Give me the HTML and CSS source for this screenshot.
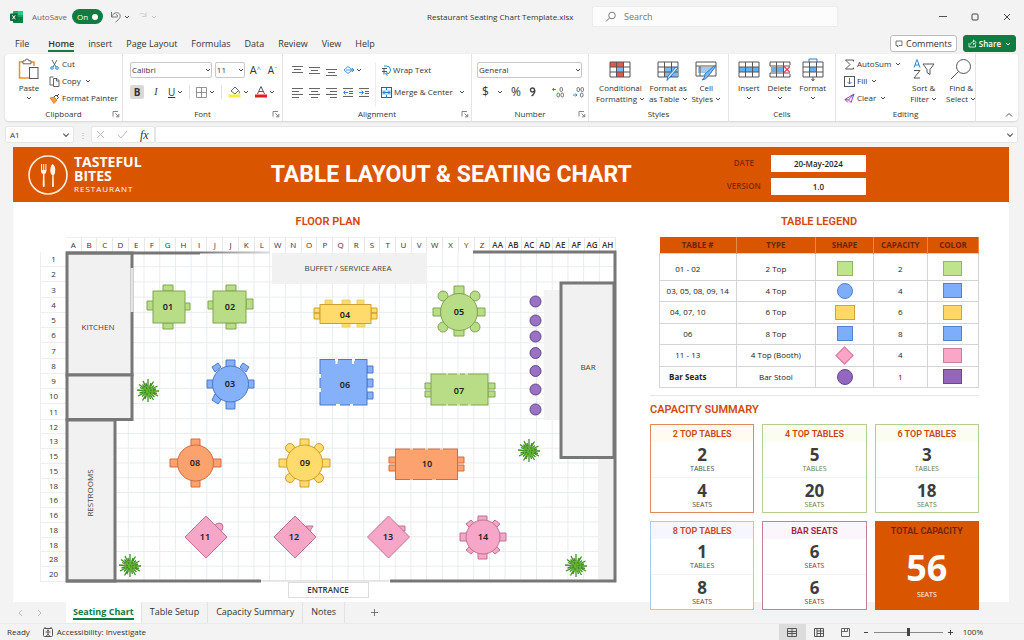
FILE: index.html
```html
<!DOCTYPE html>
<html lang="en">
<head>
  <meta charset="UTF-8">
  <meta name="viewport" content="width=device-width, initial-scale=1.0">
  <title>Restaurant Seating Chart Template.xlsx</title>
  <link rel="stylesheet" href="styles.css">
</head>
<body>
  <!-- shared icons -->
  <svg class="defs" width="0" height="0">
    <symbol id="chev" viewBox="0 0 6 6"><path d="M1 2l2 2 2-2" fill="none" stroke="currentColor" stroke-width="0.9"/></symbol>
    <symbol id="launch" viewBox="0 0 8 8"><path d="M1 6.500V1.500h5M3.500 3.500l3 3M6.800 4v2.800H4" fill="none" stroke="#666" stroke-width="0.8"/></symbol>
    <symbol id="grid" viewBox="0 0 22 18"><path d="M1 1h20v15H1zM1 6h20M1 11h20M7.500 1v15M14.500 1v15" fill="none" stroke="#555" stroke-width="1"/></symbol>
    <symbol id="plant" viewBox="-12 -12 24 24" overflow="visible">
      <path d="M0 0L11 0M0 0L9 2.500M0 0L10 5M0 0L6.500 6M0 0L5.500 9M0 0L2.500 8M0 0L0 11M0 0L-3 8M0 0L-5.500 9.500M0 0L-6 5.500M0 0L-10 5M0 0L-8.500 2M0 0L-11 -1M0 0L-8 -3.500M0 0L-9 -6.500M0 0L-5.500 -6.500M0 0L-5 -10M0 0L-2 -8M0 0L0 -12M0 0L3 -8M0 0L5.500 -9.500M0 0L6 -5.500M0 0L9.500 -5M0 0L8 -2" stroke="#3f8f22" stroke-width="1.300"/>
      <circle r="5.500" fill="#62b236"/>
      <path d="M-4 -1l2 1M-2 -4l1 2M2 -4l0 2M4 -1l-2 1M3 3l-1-2M-1 4v-2M-4 2l2-1M0 0h1" stroke="#2f7d1b" stroke-width="0.900"/>
    </symbol>
  </svg>

  <header class="titlebar">
    <div class="title-left">
      <svg width="13" height="12" viewBox="0 0 13 12"><rect x="3" width="10" height="12" rx="1" fill="#21a366"/><path d="M8 0h4a1 1 0 0 1 1 1v3H8z" fill="#33c481"/><path d="M3 6h10v5a1 1 0 0 1-1 1H4a1 1 0 0 1-1-1z" fill="#107c41"/><rect y="2.500" width="7.500" height="7.500" rx="0.800" fill="#0e6b39"/><path d="M2.300 4.300l3 4M5.300 4.300l-3 4" stroke="#fff" stroke-width="1"/></svg>
      <label class="autosave">AutoSave <input type="checkbox" checked><span class="switch">On <i></i></span></label>
      <button class="icon-btn" aria-label="Undo"><svg width="12" height="12" viewBox="0 0 12 12"><path d="M1.500 1v5h5M1.500 6C3 2 7 0.500 9.300 2.800S9.500 8 5.500 11.200M6 3.500Q8.500 4 7 6.500" fill="none" stroke="#666" stroke-width="0.900"/></svg><svg class="chev"><use href="#chev"/></svg></button>
      <button class="icon-btn faded" aria-label="Redo"><svg width="12" height="12" viewBox="0 0 12 12"><path d="M9 1.500v4H5M9 5.500C7.500 2 4 1.500 2.500 3.500" fill="none" stroke="#666" stroke-width="1"/></svg><svg class="chev"><use href="#chev"/></svg></button>
    </div>
    <div class="filename">Restaurant Seating Chart Template.xlsx</div>
    <label class="search">
      <svg width="12" height="12" viewBox="0 0 12 12"><circle cx="7" cy="4.500" r="3.300" fill="none" stroke="#777"/><path d="M4.500 7L1 10.500" stroke="#777"/></svg>
      <input type="text" placeholder="Search" aria-label="Search">
    </label>
    <div class="win">
      <button aria-label="Minimize"><svg width="8" height="8"><path d="M0 3.500h8" stroke="#555"/></svg></button>
      <button aria-label="Maximize"><svg width="8" height="8"><rect x="1" y="1" width="6" height="6" rx="1" fill="none" stroke="#444"/></svg></button>
      <button aria-label="Close"><svg width="8" height="8"><path d="M1 1l6 6M7 1L1 7" stroke="#444"/></svg></button>
    </div>
  </header>

  <nav class="menu">
    <a href="#file" class="file">File</a>
    <a href="#home" class="active">Home</a>
    <a href="#insert">insert</a>
    <a href="#layout">Page Layout</a>
    <a href="#formulas">Formulas</a>
    <a href="#data">Data</a>
    <a href="#review">Review</a>
    <a href="#view">View</a>
    <a href="#help">Help</a>
    <div class="menu-right">
      <button class="comments"><svg width="8" height="8" viewBox="0 0 8 8"><path d="M1 1h6v4.500H4L2.500 7V5.500H1z" fill="none" stroke="#555" stroke-width="0.800"/></svg>Comments</button>
      <button class="share"><svg width="9" height="9" viewBox="0 0 9 9"><path d="M1 4v4h6.500V5.500M2.500 5.500C3 3.500 4 3 5.500 3V1L8.200 3.500 5.500 5.500V4" fill="none" stroke="#fff" stroke-width="0.800"/></svg>Share<svg class="chev"><use href="#chev"/></svg></button>
    </div>
  </nav>

  <section class="ribbon">
    <div class="group">
      <div class="tools clipboard">
        <button class="big"><svg width="22" height="22" viewBox="0 0 22 22"><path d="M5 4H1.500v16H11" fill="none" stroke="#e8912d" stroke-width="1.500"/><path d="M12 4h4v4" fill="none" stroke="#e8912d" stroke-width="1.500"/><path d="M5 2.800h2.200a1.800 1.800 0 0 1 3.600 0H13v3H5z" fill="#fff" stroke="#666"/><rect x="11.500" y="9.500" width="8.500" height="11" fill="#fff" stroke="#555"/></svg>Paste<svg class="chev"><use href="#chev"/></svg></button>
        <div class="stack">
          <button><svg width="11" height="11" viewBox="0 0 11 11"><path d="M3 1l4 7M8 1L4 8" stroke="#555" stroke-width="0.900"/><circle cx="3" cy="9" r="1.300" fill="none" stroke="#2b88d8"/><circle cx="8" cy="9" r="1.300" fill="none" stroke="#2b88d8"/></svg>Cut</button>
          <button><svg width="11" height="11" viewBox="0 0 11 11"><path d="M4 9H1V1h3.500M4.500 2.500h3.500l2 2V10.500H4.500zM7.500 2.500V5H10" fill="none" stroke="#555" stroke-width="0.900"/></svg>Copy <svg class="chev"><use href="#chev"/></svg></button>
          <button class="painter"><svg width="11" height="11" viewBox="0 0 11 11"><path d="M1 5l4-1 3 3-3 3.500z" fill="#f0a04b" stroke="#c66a12" stroke-width="0.700"/><path d="M5 4l2-2 1 1 2-2M8 6l1.500-1.500L8 3" stroke="#444" fill="none"/></svg>Format Painter</button>
        </div>
      </div>
      <div class="caption">Clipboard<svg><use href="#launch"/></svg></div>
    </div>

    <div class="group">
      <div class="tools rows font">
        <div class="row font-row">
          <span class="select font-name"><select aria-label="Font"><option>Calibri</option></select><svg class="chev"><use href="#chev"/></svg></span>
          <span class="select font-size"><select aria-label="Font size"><option>11</option></select><svg class="chev"><use href="#chev"/></svg></span>
          <button class="grow">A<sup>^</sup></button>
          <button class="grow small">A<sup>ˇ</sup></button>
        </div>
        <div class="row style-row">
          <button class="bold">B</button>
          <button class="italic">I</button>
          <button><u>U</u><svg class="chev"><use href="#chev"/></svg></button>
          <span class="sep"></span>
          <button><svg width="11" height="11" viewBox="0 0 11 11"><path d="M0.500 0.500h10v10h-10zM5.500 0.500v10M0.500 5.500h10" fill="none" stroke="#888" stroke-width="0.900"/></svg><svg class="chev"><use href="#chev"/></svg></button>
          <span class="sep"></span>
          <button><svg width="13" height="12" viewBox="0 0 13 12"><path d="M3 5l4-4 3.500 3.500L7 8zM10.500 4.500q2 2 0.500 3" fill="#fff" stroke="#555" stroke-width="0.900"/><rect x="0.500" y="8.500" width="12" height="3" fill="#ffeb3b"/></svg><svg class="chev"><use href="#chev"/></svg></button>
          <button><svg width="12" height="12" viewBox="0 0 12 12"><path d="M2.500 8L6 0.500 9.500 8M4 5.500h4" fill="none" stroke="#555"/><rect y="8.500" width="12" height="3" fill="#e02020"/></svg><svg class="chev"><use href="#chev"/></svg></button>
        </div>
      </div>
      <div class="caption">Font<svg><use href="#launch"/></svg></div>
    </div>

    <div class="group">
      <div class="tools align">
        <div class="rows">
          <div class="row">
            <button aria-label="Top align"><svg width="11" height="11"><path d="M0 1.500h11M2 4.500h7M0 7.500h11" stroke="#666"/></svg></button>
            <button aria-label="Middle align"><svg width="11" height="11"><path d="M0 2.500h11M2 5.500h7M0 8.500h11" stroke="#666"/></svg></button>
            <button aria-label="Bottom align"><svg width="11" height="11"><path d="M0 4.500h11M2 7.500h7M0 10.500h11" stroke="#666"/></svg></button>
            <button aria-label="Orientation"><svg width="11" height="11" viewBox="0 0 11 11"><path d="M1 5l4-3.500L9.500 5 5 8.500zM3 5h8M9 3l2 2-2 2" fill="none" stroke="#2b88d8" stroke-width="0.900"/></svg><svg class="chev"><use href="#chev"/></svg></button>
          </div>
          <div class="row">
            <button aria-label="Align left"><svg width="11" height="11"><path d="M0 1.500h11M0 4.500h7M0 7.500h11M0 10.500h7" stroke="#666"/></svg></button>
            <button aria-label="Center"><svg width="11" height="11"><path d="M0 1.500h11M2 4.500h7M0 7.500h11M2 10.500h7" stroke="#666"/></svg></button>
            <button aria-label="Align right"><svg width="11" height="11"><path d="M0 1.500h11M4 4.500h7M0 7.500h11M4 10.500h7" stroke="#666"/></svg></button>
            <button aria-label="Decrease indent"><svg width="10" height="11"><path d="M0 1.500h10M6 4.500h4M6 6.500h4M0 9.500h10" stroke="#666"/><path d="M5 5.500H1M2.500 3.500l-2 2 2 2" fill="none" stroke="#2b88d8"/></svg></button>
            <button aria-label="Increase indent"><svg width="10" height="11"><path d="M0 1.500h10M6 4.500h4M6 6.500h4M0 9.500h10" stroke="#666"/><path d="M0 5.500h4M2.500 3.500l2 2-2 2" fill="none" stroke="#2b88d8"/></svg></button>
          </div>
        </div>
        <div class="rows wrap">
          <div class="row"><button><svg width="10" height="11" viewBox="0 0 10 11"><path d="M3 3.500v6M1 3.500h5M1 6.500h5" stroke="#555" fill="none"/><path d="M3 1h2.500a3.500 3.500 0 0 1 0 8H5M6.500 7L4.500 9l2 1.500" fill="none" stroke="#2b88d8"/></svg>Wrap Text</button></div>
          <div class="row"><button><svg width="11" height="11"><rect x="0.500" y="0.500" width="10" height="10" fill="#fff" stroke="#555"/><rect x="1" y="3" width="9" height="5" fill="#bfe0fa"/><path d="M5.500 0v3M5.500 8v3M2 5.500h7M3.500 4L2 5.500 3.500 7M7.500 4L9 5.500 7.500 7" fill="none" stroke="#2b7cc4"/></svg>Merge &amp; Center</button><button aria-label="Merge options"><svg class="chev"><use href="#chev"/></svg></button></div>
        </div>
      </div>
      <div class="caption">Alignment<svg><use href="#launch"/></svg></div>
    </div>

    <div class="group">
      <div class="tools rows">
        <div class="row"><span class="select number-format"><select aria-label="Number format"><option>General</option></select><svg class="chev"><use href="#chev"/></svg></span></div>
        <div class="row number-row">
          <button class="sym">$</button>
          <button aria-label="Currency"><svg class="chev"><use href="#chev"/></svg></button>
          <button class="sym">%</button>
          <button class="sym comma" aria-label="Comma style"><svg width="7" height="10" viewBox="0 0 7 10"><circle cx="3.500" cy="3" r="2" fill="none" stroke="#444" stroke-width="1.400"/><path d="M5.800 3Q6 7 2.500 9" fill="none" stroke="#444" stroke-width="1.400"/></svg></button>
          <span class="sep"></span>
          <button aria-label="Increase decimal"><svg width="12" height="11" viewBox="0 0 12 11"><path d="M4 2.500H0.500M2 1L0.500 2.500 2 4" fill="none" stroke="#2b88d8"/><rect x="8" y="0.500" width="2.500" height="4" rx="1.200" fill="none" stroke="#555" stroke-width="0.800"/><rect x="5" y="6" width="2.500" height="4" rx="1.200" fill="none" stroke="#555" stroke-width="0.800"/><rect x="9" y="6" width="2.500" height="4" rx="1.200" fill="none" stroke="#555" stroke-width="0.800"/></svg></button>
          <button aria-label="Decrease decimal"><svg width="12" height="11" viewBox="0 0 12 11"><rect x="5" y="0.500" width="2.500" height="4" rx="1.200" fill="none" stroke="#555" stroke-width="0.800"/><rect x="9" y="0.500" width="2.500" height="4" rx="1.200" fill="none" stroke="#555" stroke-width="0.800"/><path d="M1 8h4M3.500 6.500L5 8 3.500 9.500" fill="none" stroke="#2b88d8"/><rect x="8.500" y="6" width="2.500" height="4" rx="1.200" fill="none" stroke="#555" stroke-width="0.800"/></svg></button>
        </div>
      </div>
      <div class="caption">Number<svg><use href="#launch"/></svg></div>
    </div>

    <div class="group">
      <div class="tools bigs">
        <button class="big"><svg width="22" height="22"><rect x="7" y="1" width="8" height="15" fill="#f6b3ab"/><rect x="1" y="1" width="13" height="5" fill="#e8584a"/><rect x="7" y="6" width="7" height="5" fill="#7db8ee"/><rect x="7" y="11" width="7" height="5" fill="#e8584a"/><use href="#grid" width="22" height="18"/></svg>Conditional<span>Formatting<svg class="chev"><use href="#chev"/></svg></span></button>
        <button class="big"><svg width="22" height="22"><rect x="7" y="6" width="13" height="10" fill="#7db8ee"/><use href="#grid" width="22" height="18"/><path d="M21 7l-8 9-3 3.500 1-4.500 8-9z" fill="#cfe6fa" stroke="#2b7cc4"/></svg>Format as<span>as Table<svg class="chev"><use href="#chev"/></svg></span></button>
        <button class="big"><svg width="22" height="22"><rect x="3" y="6" width="14" height="6" fill="#9ccbf3"/><path d="M1 1h20v14H1zM1 5h20M5 5v10" fill="none" stroke="#555"/><path d="M21 5l-7 9q-3 5-7 5 3-2 3-6l9-8z" fill="#7db8ee" stroke="#2b7cc4"/></svg>Cell<span>Styles<svg class="chev"><use href="#chev"/></svg></span></button>
      </div>
      <div class="caption">Styles</div>
    </div>

    <div class="group">
      <div class="tools bigs">
        <button class="big"><svg width="22" height="22"><rect x="1" y="6" width="20" height="5" fill="#62b0f0"/><use href="#grid" width="22" height="18"/></svg>Insert<svg class="chev"><use href="#chev"/></svg></button>
        <button class="big"><svg width="22" height="22"><rect x="2" y="6" width="12" height="5" fill="#62b0f0"/><path d="M21 4V1H1v4h20M21 13v3H1v-4h20M7.500 1v15M14.500 1v15" fill="none" stroke="#555"/><path d="M15 5.500l6 6M21 5.500l-6 6" stroke="#e0434f" stroke-width="1.200"/></svg>Delete<svg class="chev"><use href="#chev"/></svg></button>
        <button class="big"><svg width="22" height="22"><rect x="7" y="6" width="7" height="5" fill="#62b0f0"/><use href="#grid" width="22" height="18"/><path d="M7 1v-3h8v3" fill="none" stroke="#2b7cc4"/><path d="M11 16v3M9.500 18l1.500 2 1.500-2" fill="none" stroke="#555"/></svg>Format<svg class="chev"><use href="#chev"/></svg></button>
      </div>
      <div class="caption">Cells</div>
    </div>

    <div class="group">
      <div class="tools editing">
        <div class="stack">
          <button><svg width="11" height="11"><path d="M9.500 2.500V1h-8L6 5.500 1.500 10h8V8.500" fill="none" stroke="#555"/></svg>AutoSum <svg class="chev"><use href="#chev"/></svg></button>
          <button><svg width="11" height="11"><rect x="0.500" y="0.500" width="10" height="10" fill="#fff" stroke="#555"/><path d="M5.500 2v6M3.500 6l2 2 2-2" fill="none" stroke="#2b7cc4"/></svg>Fill <svg class="chev"><use href="#chev"/></svg></button>
          <button><svg width="11" height="11"><path d="M1 6.500L10 1 7 9.500 4.500 7z" fill="#fff" stroke="#8e44ad"/><path d="M1 6.500l3 3M4.500 7L10 1" stroke="#8e44ad"/></svg>Clear <svg class="chev"><use href="#chev"/></svg></button>
        </div>
        <button class="big"><svg width="22" height="22" viewBox="0 0 22 21"><path d="M1 9L4 1l3 8M2 6.500h4" fill="none" stroke="#2b88d8"/><path d="M1 12h6L1 19.500h6" fill="none" stroke="#555"/><path d="M10 5.500h11l-4 5.500v5l-3-2v-3z" fill="none" stroke="#555"/></svg>Sort &amp;<span>Filter<svg class="chev"><use href="#chev"/></svg></span></button>
        <button class="big"><svg width="22" height="22" viewBox="0 0 22 21"><circle cx="13.500" cy="8" r="7" fill="none" stroke="#555"/><path d="M8.500 13L1 20.500" stroke="#555"/></svg>Find &amp;<span>Select<svg class="chev"><use href="#chev"/></svg></span></button>
      </div>
      <div class="caption">Editing</div>
    </div>

    <button class="collapse" aria-label="Collapse ribbon"><svg width="8" height="6"><path d="M1 4.500L4 1.500l3 3" fill="none" stroke="#555"/></svg></button>
  </section>

  <div class="formula">
    <span class="namebox"><input type="text" value="A1" aria-label="Name box"><svg class="chev wide"><use href="#chev"/></svg></span>
    <span class="dots">⋮</span>
    <span class="fx">
      <button aria-label="Cancel"><svg width="9" height="9"><path d="M1 1l7 7M8 1L1 8" stroke="#bbb"/></svg></button>
      <button aria-label="Enter"><svg width="11" height="9"><path d="M1 5l3 3 6-7" fill="none" stroke="#bbb"/></svg></button>
      <button class="fn">fx</button>
    </span>
    <span class="formula-input"><input type="text" aria-label="Formula"><svg class="chev wide"><use href="#chev"/></svg></span>
  </div>

  <main class="sheet">
    <div class="banner">
      <div class="brand">
        <svg width="40" height="40" viewBox="0 0 40 40"><circle cx="20" cy="20" r="19" fill="none" stroke="#ffeedd" stroke-width="1.600"/><path d="M13 9v7q0 2.500 2 3.200L14.700 31q0 1 1 1t1-1L16.400 19.200q2-.7 2-3.200V9h-1v6h-1.200V9h-1v6H14.100V9z" fill="#fff6ea"/><path d="M24.500 9q3 1.500 2.700 7 0 3-1.600 4L26 31q0 1-1 1t-1-1l.3-11q-2-1-2-4 .2-5.500 2.200-7z" fill="#fff6ea"/></svg>
        <div>
          <div class="brand-name">TASTEFUL</div>
          <div class="brand-name">BITES</div>
          <div class="brand-sub">RESTAURANT</div>
        </div>
      </div>
      <h1>TABLE LAYOUT &amp; SEATING CHART</h1>
      <dl>
        <dt>DATE</dt><dd>20-May-2024</dd>
        <dt>VERSION</dt><dd>1.0</dd>
      </dl>
    </div>

    <div class="content">
      <section class="floor">
        <h2>FLOOR PLAN</h2>
        <div class="plan">
          <div class="cols" id="cols"></div>
          <div class="rownums" id="rows"></div>
          <svg class="map" viewBox="66 252 550 330">
            <defs>
              <pattern id="cellsA" x="66" y="252" width="15.700" height="15.200" patternUnits="userSpaceOnUse"><path d="M15.200 0v15.200M0 14.700h15.700" stroke="#e9ecee"/></pattern>
              <pattern id="cellsB" x="66" y="419.200" width="15.700" height="14.750" patternUnits="userSpaceOnUse"><path d="M15.200 0v14.750M0 14.250h15.700" stroke="#e9ecee"/></pattern>
              <linearGradient id="fade"><stop offset="0" stop-color="#777"/><stop offset="1" stop-color="#ddd"/></linearGradient>
            </defs>
            <rect x="66" y="252" width="550" height="167.200" fill="url(#cellsA)"/>
            <rect x="66" y="419.200" width="550" height="162" fill="url(#cellsB)"/>

            <!-- rooms -->
            <g fill="#f1f1f1">
              <rect x="272" y="253" width="155" height="31"/>
              <rect x="544" y="290" width="17" height="130" fill="#f3f3f3"/>
              <rect x="598" y="458" width="16" height="122"/>
              <g stroke="#777" stroke-width="3">
                <rect x="67" y="253" width="65" height="122"/>
                <rect x="67" y="375" width="65" height="44.500"/>
                <rect x="67" y="420" width="48" height="161"/>
                <rect x="561" y="283" width="53" height="174.500"/>
              </g>
            </g>
            <path d="M132 268v44" stroke="#e4e4e4" stroke-width="3"/>
            <path d="M66 253h134M473 252h142v329H390M66 581h195" fill="none" stroke="#777" stroke-width="3"/>
            <rect x="200" y="251.500" width="70" height="2" fill="url(#fade)"/>
            <path d="M261 581h40M301 581h88" stroke="#d4d4d4"/>

            <g class="room">
              <text x="98" y="330">KITCHEN</text>
              <text x="348" y="271">BUFFET / SERVICE AREA</text>
              <text x="588" y="370">BAR</text>
              <text transform="translate(93 493) rotate(-90)">RESTROOMS</text>
            </g>

            <!-- tables, grouped by colour -->
            <g class="green">
              <path d="M163 285h10v6h-10zM163 323h10v6h-10zM147 301h7v9h-7zM184 303h6v7h-6z"/>
              <rect x="153" y="291" width="32" height="32"/>
              <path d="M226 285h10v6h-10zM226 323h10v6h-10zM208 301h6v8h-6zM246 299h7v10h-7z"/>
              <rect x="213" y="291" width="33" height="32"/>
              <path d="M454 286h10v8h-10zM454 328h10v8h-10zM433 308h8v8h-8zM477 308h8v8h-8z"/>
              <circle cx="443" cy="296" r="5"/><circle cx="475" cy="296" r="5"/><circle cx="443" cy="327" r="5"/><circle cx="475" cy="327" r="5"/>
              <circle cx="459" cy="312" r="18.500"/>
              <path d="M425 383h7v6h-7zM425 391h7v6h-7zM488 383h7v6h-7zM488 391h7v6h-7z"/>
              <rect x="431" y="374" width="57" height="31"/>
              <path class="gap thin" d="M446 374h2M457 374h3M465 374h3M446 405h2M457 405h3M468 405h3"/>
            </g>
            <g class="blue">
              <path d="M226 360h9v8h-9zM226 401h9v8h-9zM207 380h7v8h-7zM247 380h7v8h-7z"/>
              <path d="M212 367l6-4 3 4-6 5zM249 367l-6-4-3 4 6 5zM212 400l6 4 3-4-6-6z"/>
              <circle cx="230.500" cy="384" r="18"/>
              <path d="M367 366h6v7h-6zM367 379h6v8h-6zM367 392h6v7h-6z"/>
              <rect x="320" y="359.500" width="47" height="45.500"/>
              <path class="gap" d="M335 360h3M352 360h3M336 405h4M350 405h3M320 374v4M320 388v4M336.500 360v4M353 360v4"/>
            </g>
            <g class="yellow">
              <path d="M314 308h6v5h-6zM314 313h6v6h-6zM371 308h6v5h-6zM371 313h6v6h-6z"/>
              <path class="faint" d="M325 300h7v5h-7zM342 300h8v5h-8zM357 300h7v5h-7zM342 323h8v4h-8zM357 323h8v4h-8z"/>
              <rect x="320" y="304.500" width="51" height="19"/>
              <path d="M300 439h9v8h-9zM300 479h9v8h-9zM279 459h9v8h-9zM321 459h9v8h-9z"/>
              <circle cx="290" cy="448" r="4.500"/><circle cx="319" cy="448" r="4.500"/><circle cx="290" cy="478" r="4.500"/><circle cx="319" cy="478" r="4.500"/>
              <circle cx="304.500" cy="463" r="18"/>
            </g>
            <g class="orange">
              <path d="M191 439h9v8h-9zM191 479h9v8h-9zM170 459h9v8h-9zM212 459h9v8h-9z"/>
              <circle cx="195.500" cy="463" r="18"/>
              <path d="M389 457h7v6h-7zM389 465h7v6h-7zM457 457h7v6h-7zM457 465h7v6h-7z"/>
              <rect x="395.500" y="449" width="62" height="30.500"/>
              <path class="gap thin" d="M410 449h3M425 449h3M440 449h3M410 480h3M432 480h4"/>
            </g>
            <g class="pink">
              <circle cx="219" cy="527" r="4"/><path d="M306 526h7l-3 5zM398 526h7v5h-5z"/>
              <path d="M206 516l21 21-21 21-21-21zM295 516l21 21-21 21-21-21zM388.500 516l21 21-21 21-21-21z"/>
              <path d="M478 516h9v6h-9zM478 553h9v6h-9zM460 533h7v8h-7zM499 533h7v8h-7z"/>
              <path d="M466 524l5-4 4 4-5 4zM500 524l-5-4-4 4 5 4zM466 550l5 4 4-4-5-4zM500 550l-5 4-4-4 5-4z"/>
              <circle cx="483" cy="537" r="17"/>
            </g>
            <g class="purple">
              <circle cx="535.500" cy="301.500" r="5.500"/><circle cx="535.500" cy="320.500" r="5.500"/><circle cx="535.500" cy="336.500" r="5.500"/><circle cx="535.500" cy="353" r="5.500"/><circle cx="535.500" cy="371" r="5.500"/><circle cx="535.500" cy="389.500" r="5.500"/><circle cx="535.500" cy="409.500" r="5.500"/>
            </g>
            <g class="num">
              <text x="168" y="310">01</text><text x="230" y="310">02</text><text x="230" y="387">03</text>
              <text x="345" y="318">04</text><text x="459" y="315">05</text><text x="345" y="388">06</text>
              <text x="459" y="394">07</text><text x="195" y="466">08</text><text x="305" y="466">09</text>
              <text x="427" y="467">10</text><text x="205" y="540">11</text><text x="294" y="540">12</text>
              <text x="388" y="540">13</text><text x="483" y="540">14</text>
            </g>
            <use href="#plant" x="136" y="379" width="24" height="24"/>
            <use href="#plant" x="118" y="554" width="24" height="24"/>
            <use href="#plant" x="517" y="439" width="24" height="24"/>
            <use href="#plant" x="564" y="554" width="24" height="24"/>
          </svg>
        </div>
        <div class="entrance">ENTRANCE</div>
      </section>

      <section class="side">
        <h2 class="legend-title">TABLE LEGEND</h2>
        <table class="legend">
          <thead>
            <tr><th>TABLE #</th><th>TYPE</th><th>SHAPE</th><th>CAPACITY</th><th>COLOR</th></tr>
          </thead>
          <tbody>
            <tr><td class="short">01 - 02</td><td>2 Top</td><td><i class="shape square c-green"></i></td><td>2</td><td><i class="swatch c-green"></i></td></tr>
            <tr><td>03, 05, 08, 09, 14</td><td>4 Top</td><td><i class="shape circle c-blue"></i></td><td>4</td><td><i class="swatch c-blue"></i></td></tr>
            <tr><td class="short">04, 07, 10</td><td>6 Top</td><td><i class="shape rect c-yellow"></i></td><td>6</td><td><i class="swatch c-yellow"></i></td></tr>
            <tr><td class="short">06</td><td>8 Top</td><td><i class="shape square c-blue"></i></td><td>8</td><td><i class="swatch c-blue"></i></td></tr>
            <tr><td class="short">11 - 13</td><td>4 Top (Booth)</td><td><i class="shape diamond c-pink"></i></td><td>4</td><td><i class="swatch c-pink"></i></td></tr>
            <tr><td class="short strong">Bar Seats</td><td>Bar Stool</td><td><i class="shape circle c-purple"></i></td><td>1</td><td><i class="swatch c-purple"></i></td></tr>
          </tbody>
        </table>

        <h2 class="summary-title">CAPACITY SUMMARY</h2>
        <div class="cards">
          <div class="card c1"><h3>2 TOP TABLES</h3><div><b>2</b><small>TABLES</small></div><div><b>4</b><small>SEATS</small></div></div>
          <div class="card c2"><h3>4 TOP TABLES</h3><div><b>5</b><small>TABLES</small></div><div><b>20</b><small>SEATS</small></div></div>
          <div class="card c2"><h3>6 TOP TABLES</h3><div><b>3</b><small>TABLES</small></div><div><b>18</b><small>SEATS</small></div></div>
          <div class="card c3"><h3>8 TOP TABLES</h3><div><b>1</b><small>TABLES</small></div><div><b>8</b><small>SEATS</small></div></div>
          <div class="card c4"><h3>BAR SEATS</h3><div><b>6</b><small>SEATS</small></div><div><b>6</b><small>SEATS</small></div></div>
          <div class="card total"><h3>TOTAL CAPACITY</h3><div><b>56</b><small>SEATS</small></div></div>
        </div>
      </section>
    </div>
  </main>

  <nav class="sheets">
    <span class="arrows">
      <button aria-label="Previous sheet"><svg width="6" height="8"><path d="M5 1L2 4l3 3" fill="none" stroke="#bbb"/></svg></button>
      <button aria-label="Next sheet"><svg width="6" height="8"><path d="M1 1l3 3-3 3" fill="none" stroke="#bbb"/></svg></button>
    </span>
    <a href="#seating" class="active"><span>Seating Chart</span></a>
    <a href="#setup">Table Setup</a>
    <a href="#summary">Capacity Summary</a>
    <a href="#notes">Notes</a>
    <button class="add" aria-label="New sheet"><svg width="7" height="7"><path d="M0 3.500h7M3.500 0v7" stroke="#777"/></svg></button>
  </nav>

  <footer class="status">
    <span>Ready</span>
    <svg width="10" height="10"><rect x="0.500" y="1.500" width="9" height="8" rx="1" fill="none" stroke="#555"/><circle cx="5" cy="3.500" r="1" fill="#555"/><path d="M2.500 5h5M5 5v2M3.500 9L5 7l1.500 2M2 0v2M8 0v2" stroke="#555" fill="none"/></svg>
    <span>Accessibility: Investigate</span>
    <div class="views">
      <button class="on" aria-label="Normal"><svg width="10" height="9"><path d="M0.500 0.500h9v8h-9zM0.500 3.500h9M0.500 5.500h9M5 0.500v8" fill="none" stroke="#555"/></svg></button>
      <button aria-label="Page layout"><svg width="10" height="9"><path d="M0.500 0.500h9v8h-9zM3 0.500v8M3 3h6.500M3 5.500h6.500M6.500 0.500v8" fill="none" stroke="#555"/></svg></button>
      <button aria-label="Page break"><svg width="10" height="9"><path d="M0.500 0.500h8v8h-8zM0.500 3.500h6v-3M3.500 0.500v3" fill="none" stroke="#666"/></svg></button>
    </div>
    <button class="zoom-out" aria-label="Zoom out"><svg width="5" height="5"><path d="M0 2.500h4" stroke="#444"/></svg></button>
    <input type="range" min="0" max="100" value="50" aria-label="Zoom">
    <button aria-label="Zoom in"><svg width="5" height="5"><path d="M0 2.500h5M2.500 0v5" stroke="#444"/></svg></button>
    <span class="percent">100%</span>
  </footer>

  <script>
    const cols = 'A B C D E F G H I J J K L W N O P Q R S T U V W X Y Z AA AB AC AD AE AF AG AH'.split(' ');
    const rows = '1 2 3 4 5 6 7 8 9 10 11 12 13 15 15 18 16 16 18 18 28 20'.split(' ');

    function fill(id, labels) {
      document.getElementById(id).innerHTML = labels.map(l => `<span>${l}</span>`).join('');
    }

    fill('cols', cols);
    fill('rows', rows);
  </script>
</body>
</html>
```
FILE: styles.css
```css
* {
  box-sizing: border-box;
}

body {
  margin: 0;
  min-height: 100vh;
  display: flex;
  flex-direction: column;
  background: #f3f3f3;
  color: #333;
  font-family: "Open Sans", "Noto Sans", sans-serif;
  font-size: 8px;
  line-height: 12px;
}

button, input, select {
  font: inherit;
  color: inherit;
  background: none;
  border: 0;
  padding: 0;
  margin: 0;
}

button {
  display: inline-flex;
  align-items: center;
  white-space: nowrap;
}

a {
  color: inherit;
  text-decoration: none;
}

svg {
  flex: none;
}

.defs {
  position: absolute;
}

.chev {
  width: 6px;
  height: 6px;
  margin-left: 2px;
}

.chev.wide {
  width: 8px;
  height: 8px;
  color: #555;
}

h1, h2, h3, dl, dd {
  margin: 0;
}

/* title bar */
.titlebar {
  height: 33px;
  display: grid;
  grid-template-columns: 427fr 165fr 246fr 186fr;
  align-items: center;
}

.title-left {
  display: flex;
  align-items: center;
  padding-left: 10px;
}

.autosave {
  display: flex;
  align-items: center;
  gap: 5px;
  margin-left: 9px;
  color: #666;
}

.autosave input {
  position: absolute;
  opacity: 0;
}

.switch {
  display: flex;
  align-items: center;
  justify-content: space-between;
  width: 31px;
  height: 15px;
  padding: 0 5px;
  border-radius: 8px;
  background: #107c41;
  color: #fff;
}

.switch i {
  width: 6px;
  height: 6px;
  border-radius: 3px;
  background: #fff;
}

.icon-btn {
  margin-left: 7px;
}

.faded {
  opacity: 0.25;
}

.search {
  display: flex;
  align-items: center;
  gap: 7px;
  height: 21px;
  padding-left: 12px;
  background: #fcfcfc;
  border: 1px solid #ececec;
  border-radius: 2px;
}

.search input {
  flex: 1;
  min-width: 0;
  font-size: 9px;
}

.win {
  display: flex;
  justify-content: flex-end;
  gap: 24px;
  padding-right: 13px;
}

/* menu tabs */
.menu {
  height: 21px;
  display: flex;
  align-items: center;
  gap: 14px;
  padding: 0 8px 0 15px;
  font-size: 9px;
}

.menu .file {
  margin-right: 5px;
}

.menu .active {
  font-weight: 600;
  box-shadow: 0 2px #107c41;
}

.menu-right {
  display: flex;
  gap: 6px;
  margin-left: auto;
}

.comments, .share {
  height: 17px;
  gap: 3px;
  padding: 0 4px;
  border: 1px solid #bdbdbd;
  border-radius: 3px;
  background: #fff;
}

.share {
  gap: 2px;
  border-color: #107c41;
  background: #107c41;
  color: #fff;
  font-size: 8px;
  font-weight: 600;
}

/* ribbon */
.ribbon {
  display: grid;
  grid-template-columns: 118fr 160fr 189fr 117fr 140fr 107fr 140fr 42fr;
  height: 67px;
  margin: 0 6px 0 5px;
  background: #fff;
  border-radius: 4px;
  box-shadow: 0 1px 2px #d5d5d5;
}

.group {
  display: flex;
  flex-direction: column;
  justify-content: space-between;
  min-width: 0;
  border-right: 1px solid #e4e4e4;
}

.tools {
  display: flex;
  height: 53px;
  padding: 4px 5px 0;
}

.caption {
  display: flex;
  justify-content: center;
  position: relative;
  height: 13px;
  line-height: 12px;
}

.caption svg {
  position: absolute;
  right: 2px;
  top: 2px;
  width: 8px;
  height: 8px;
}

.big {
  flex-direction: column;
  justify-content: flex-start;
  line-height: 11px;
}

.big > svg:first-child {
  margin-bottom: 2px;
}

.bigs .big > svg:first-child {
  padding-top: 3px;
  overflow: visible;
}

.big span {
  display: flex;
  align-items: center;
}

.big > .chev {
  margin: 2px 0 0;
}

.clipboard {
  gap: 9px;
  padding-left: 13px;
}

.stack {
  display: flex;
  flex-direction: column;
  align-items: flex-start;
  gap: 5px;
}

.stack button {
  gap: 2px;
  height: 12px;
}

.rows {
  display: flex;
  flex-direction: column;
  gap: 6px;
}

.row {
  display: flex;
  align-items: center;
  height: 16px;
}

.tools.rows, .align {
  padding-top: 8px;
}

.tools.font {
  padding-left: 7px;
}

.select {
  display: flex;
  align-items: center;
  height: 16px;
  border: 1px solid #c8c8c8;
  border-radius: 2px;
}

.select select {
  flex: 1;
  min-width: 0;
  padding-left: 1px;
  appearance: none;
}

.font-name {
  width: 82px;
}

.font-size {
  width: 30px;
}

.number-format {
  width: 105px;
}

.font-row {
  gap: 3px;
}

.grow {
  margin-left: 2px;
  font-size: 11px;
}

.grow.small {
  margin-left: 4px;
  font-size: 10px;
}

.grow sup {
  font-size: 7px;
  color: #2b88d8;
}

.style-row {
  gap: 6px;
  font-size: 10px;
}

.bold {
  width: 14px;
  height: 14px;
  justify-content: center;
  border-radius: 2px;
  background: #d9d9d9;
  font-weight: 700;
}

.italic {
  width: 12px;
  justify-content: center;
  font-family: "Liberation Serif", serif;
  font-style: italic;
}

.sep {
  width: 1px;
  height: 14px;
  background: #e0e0e0;
}

.align {
  padding-left: 9px;
}

.align .row {
  gap: 6px;
}

.wrap {
  margin-left: 6px;
  padding-left: 5px;
  border-left: 1px solid #eee;
}

.align .wrap .row {
  gap: 4px;
}

.wrap button {
  gap: 2px;
}

.number-row {
  gap: 8px;
  padding-left: 5px;
}

.number-row .chev {
  margin: 0;
}

.sym {
  font-size: 12px;
}

.bigs {
  justify-content: space-around;
}

.editing {
  gap: 9px;
  padding: 4px 10px 0 8px;
}

.editing .stack {
  margin-right: auto;
}

.collapse {
  align-self: end;
  justify-self: end;
  padding: 3px 5px;
}

/* formula bar */
.formula {
  display: flex;
  align-items: center;
  height: 17px;
  margin: 5px 6px 4px 5px;
}

.namebox, .fx, .formula-input {
  display: flex;
  align-items: center;
  height: 17px;
  padding: 0 3px 0 4px;
  background: #fff;
  border: 1px solid #e6e6e6;
  border-radius: 2px;
}

.namebox {
  width: 69px;
}

.namebox input, .formula-input input {
  flex: 1;
  min-width: 0;
}

.dots {
  width: 17px;
  text-align: center;
  color: #aaa;
}

.fx {
  gap: 12px;
  width: 64px;
}

.fn {
  font-family: "Liberation Serif", serif;
  font-style: italic;
  font-size: 12px;
}

.formula-input {
  flex: 1;
}

/* worksheet */
.sheet {
  position: relative;
  z-index: 1;
  flex: 1;
  margin: 0 15px 0 13px;
  background: #fff;
}

.banner {
  display: grid;
  grid-template-columns: 259fr 358fr 379fr;
  align-items: center;
  height: 55px;
  background: #d95500;
  color: #fff;
}

.brand {
  display: flex;
  align-items: center;
  gap: 6px;
  padding-left: 15px;
}

.brand-name {
  font-size: 14px;
  line-height: 14px;
  font-weight: 700;
}

.brand-sub {
  font-size: 8px;
  line-height: 11px;
  letter-spacing: 1px;
}

h1 {
  font-family: Roboto, sans-serif;
  font-size: 23px;
  line-height: 28px;
  font-weight: 700;
  white-space: nowrap;
}

dl {
  display: grid;
  grid-template-columns: 54px 95px;
  gap: 6px 0;
  padding-left: 85px;
  align-items: center;
}

dt {
  color: #7d2900;
  font-weight: 600;
  text-align: center;
}

dd {
  height: 17px;
  line-height: 17px;
  background: #fff;
  color: #222;
  text-align: center;
  font-weight: 600;
}

.content {
  display: grid;
  grid-template-columns: 576fr 329fr;
  align-items: start;
  gap: 34px;
  padding: 12px 30px 0 27px;
}

h2 {
  font-family: Roboto, sans-serif;
  font-size: 11px;
  line-height: 16px;
  font-weight: 600;
  text-align: center;
  color: #d4470b;
}

.plan {
  display: grid;
  grid-template-columns: 26px 1fr;
  margin-top: 7px;
}

.cols {
  grid-column: 2;
  display: grid;
  grid-template-columns: repeat(35, 1fr);
  height: 15px;
  border-top: 1px solid #eee;
}

.cols span, .rownums span {
  display: flex;
  align-items: center;
  justify-content: center;
  min-width: 0;
  border-right: 1px solid #e8e8e8;
}

.cols span:nth-child(n+28) {
  font-weight: 600;
}

.rownums {
  display: grid;
  grid-template-rows: repeat(11, 31fr) repeat(11, 30fr);
  border-left: 1px solid #eee;
}

.rownums span {
  min-height: 0;
  border-right: 0;
  border-bottom: 1px solid #eee;
}

.map {
  display: block;
  width: 100%;
  overflow: visible;
}

.map text {
  text-anchor: middle;
  stroke: none;
}

.num {
  font-family: "Noto Sans", sans-serif;
  font-size: 9px;
  font-weight: 600;
  fill: #222;
}

.room {
  font-size: 8px;
  fill: #444;
}

.green { fill: #b9dd86; stroke: #7fa551; }
.blue { fill: #85b0fa; stroke: #4c78c8; }
.yellow { fill: #ffdb6b; stroke: #cf9f2c; }
.orange { fill: #fba26f; stroke: #cf6f3e; }
.pink { fill: #f6a6c6; stroke: #bd7396; }
.purple { fill: #9a72c4; stroke: #60448c; }

.faint {
  stroke: #f0cf6c;
}

.gap {
  stroke: #fff;
  stroke-width: 2;
}

.gap.thin {
  stroke-width: 1;
}

.entrance {
  width: 81px;
  height: 16px;
  margin: 0 auto;
  border: 1px solid #ddd;
  line-height: 14px;
  text-align: center;
  font-weight: 600;
  background: #fff;
}

/* legend */
.side {
  /* the last cards hang over the tab strip */
  margin-bottom: -8px;
}

.legend-title {
  padding-left: 9px;
}

.legend {
  width: calc(100% - 9px);
  margin: 7px 0 0 9px;
  border-collapse: collapse;
  table-layout: fixed;
  text-align: center;
  color: #222;
}

.legend th {
  height: 16px;
  padding: 0;
  background: #d95500;
  border-right: 1px solid #e98a4c;
  color: #6e2400;
}

.legend th:nth-child(1) { width: 24%; }
.legend th:nth-child(2) { width: 25%; }
.legend th:nth-child(3) { width: 18%; }
.legend th:nth-child(4) { width: 17%; }

.legend td {
  height: 22px;
  padding: 0;
  border: 1px solid #d4d4d4;
  white-space: nowrap;
}

.legend tr:nth-child(even) td {
  height: 21px;
}

.legend tr:first-child td {
  height: 27px;
  padding-top: 4px;
}

.legend .short {
  padding-right: 20px;
}

.legend .strong {
  font-weight: 700;
}

.shape, .swatch {
  display: block;
  width: 19px;
  height: 15px;
  margin: 0 auto;
  border: 1px solid;
}

.square { width: 16px; }
.rect { width: 20px; }
.circle { width: 16px; height: 16px; border-radius: 8px; }
.diamond { width: 13px; height: 13px; transform: rotate(45deg); }

.c-green { background: #c0e38e; border-color: #8fb862; }
.c-blue { background: #7eaefb; border-color: #5581cf; }
.c-yellow { background: #ffd866; border-color: #c9a53c; }
.c-pink { background: #fba6c6; border-color: #c8809d; }
.c-purple { background: #9467bd; border-color: #69459a; }

/* capacity cards */
.summary-title {
  margin-top: 7px;
  padding-top: 6px;
  border-top: 1px solid #e6e6e6;
  text-align: left;
}

.cards {
  display: grid;
  grid-template-columns: repeat(3, 1fr);
  gap: 8px;
  margin-top: 6px;
}

.card {
  height: 89px;
  border: 1px solid #e08a5c;
  background: #fff;
  text-align: center;
  color: #4d4d4d;
}

.card h3 {
  height: 17px;
  font-family: Roboto, sans-serif;
  font-size: 9px;
  line-height: 18px;
  font-weight: 600;
  color: #cb4515;
  background: #fffaf2;
}

.card div {
  height: 35px;
  padding-top: 4px;
}

.card div + div {
  border-top: 1px solid #f2f2f2;
}

.card b {
  display: block;
  font-family: "Noto Sans", sans-serif;
  font-size: 17px;
  line-height: 17px;
  color: #3d3d3d;
}

.card small {
  display: block;
  font-size: 7px;
  line-height: 11px;
}

.c2 { border-color: #b4cf94; }
.c2 h3 { background: #fbfdf0; }
.c2 small { color: #66803f; }
.c3 { border-color: #a9cde6; }
.c3 h3 { background: #f6f6ff; }
.c4 { border-color: #cc7d9c; }
.c4 h3, .c4 small { color: #a51c3c; }
.c4 h3 { background: #fbf6fb; }

.card.total {
  border-color: #d95500;
  background: #d95500;
}

.total h3 {
  background: none;
  color: #6e2400;
}

.total div {
  padding-top: 10px;
}

.total b {
  font-size: 36px;
  line-height: 38px;
  color: #fff;
}

.total small {
  margin-top: 2px;
  color: #fff;
}

/* sheet tabs */
.sheets {
  display: flex;
  align-items: center;
  height: 21px;
  font-size: 9px;
}

.arrows {
  display: flex;
  gap: 14px;
  width: 66px;
  padding-left: 17px;
}

.sheets a {
  height: 21px;
  padding: 0 8px;
  line-height: 20px;
  border-right: 1px solid #e2e2e2;
}

.sheets .active {
  padding: 0 7px;
  background: #fff;
  color: #107c41;
  font-weight: 700;
}

.sheets .active span {
  box-shadow: 0 2px #107c41;
}

.add {
  margin-left: 26px;
}

/* status bar */
.status {
  display: flex;
  align-items: center;
  height: 17px;
  padding: 0 41px 0 7px;
  border-top: 1px solid #eaeaea;
}

.status > svg {
  margin: 0 4px 0 13px;
}

.views {
  display: flex;
  margin: 0 4px 0 auto;
}

.views button {
  justify-content: center;
  width: 27px;
  height: 17px;
}

.views .on {
  background: #dcdcdc;
}

.status input {
  width: 69px;
  height: 12px;
  margin: 0 5px;
  appearance: none;
  background: linear-gradient(#888, #888) center / 100% 1px no-repeat;
}

.status input::-webkit-slider-thumb {
  appearance: none;
  width: 3px;
  height: 8px;
  background: #444;
}

.percent {
  margin-left: 10px;
}
```
